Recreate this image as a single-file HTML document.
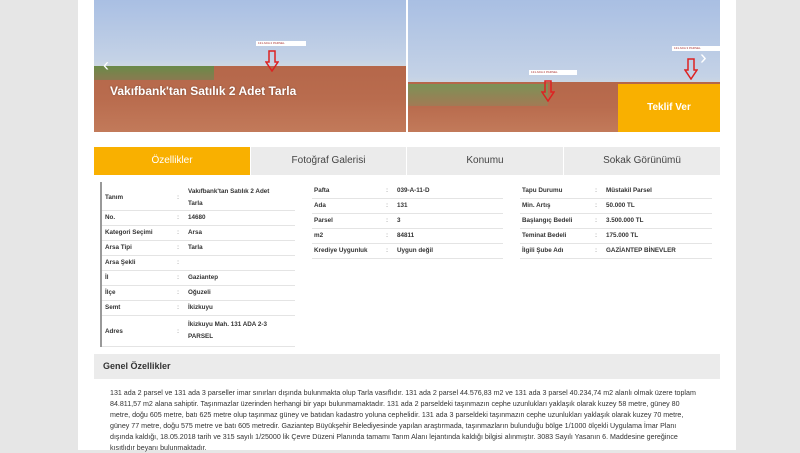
<!DOCTYPE html>
<html><head><meta charset="utf-8"><style>
*{margin:0;padding:0;box-sizing:border-box}
body{width:800px;height:450px;overflow:hidden;background:#e6e6e6;font-family:"Liberation Sans",sans-serif;position:relative}
.panel{position:absolute;left:78px;top:0;width:658px;height:450px;background:#fff}
.img{position:absolute;top:0;height:132px;overflow:hidden}
.sky{position:absolute;left:0;right:0;top:0;height:70px;background:linear-gradient(#a9bfe3,#c4d2e6 85%,#d5dbe0)}
.field{position:absolute;left:0;right:0;top:64px;bottom:0;background:linear-gradient(#b5674a,#b96c4e 50%,#c27a5a)}
.lbl{position:absolute;background:#fff;height:5px;font-size:3px;color:#a33;line-height:5px;padding-left:2px}
.arrow{position:absolute;width:14px;height:22px}
.tab{position:absolute;top:147px;height:28px;background:#ebebeb;font-size:10px;color:#444;text-align:center;line-height:28px}
.row{position:absolute;border-bottom:1px solid #e4e4e4;font-size:6.3px;color:#333;font-weight:bold}
.row span{position:absolute}
.para{position:absolute;left:110px;top:388px;width:620px;font-size:7.1px;line-height:10.9px;color:#333;white-space:nowrap}
</style></head><body>
<div class="panel"></div>
<div class="img" style="left:94px;width:312px">
 <div class="sky"></div><div class="field" style="top:66px"></div>
 <div style="position:absolute;left:0;top:66px;width:120px;height:14px;background:linear-gradient(#6a8a48,#8a7a50)"></div>
 <div class="lbl" style="left:162px;top:41px;width:50px">131 ADA 2 PARSEL</div>
 <svg class="arrow" style="left:171px;top:50px" viewBox="0 0 14 22"><path d="M4 1h6v11h3L7 21 1 12h3z" fill="none" stroke="#d22" stroke-width="1.5"/></svg>
 <div style="position:absolute;left:9px;top:55px;color:#fff;font-size:18px">&#8249;</div>
 <div style="position:absolute;left:16px;top:84px;color:#fff;font-size:12px;font-weight:bold;text-shadow:0 0 2px rgba(0,0,0,.3)">Vakıfbank'tan Satılık 2 Adet Tarla</div>
</div>
<div class="img" style="left:408px;width:312px">
 <div class="sky" style="height:90px"></div><div class="field" style="top:82px"></div>
 <div style="position:absolute;left:0;top:84px;width:140px;height:22px;background:linear-gradient(#7c9256,#a27a55)"></div>
 <div class="lbl" style="left:121px;top:70px;width:48px">131 ADA 2 PARSEL</div>
 <svg class="arrow" style="left:133px;top:80px" viewBox="0 0 14 22"><path d="M4 1h6v11h3L7 21 1 12h3z" fill="none" stroke="#d22" stroke-width="1.5"/></svg>
 <div class="lbl" style="left:264px;top:46px;width:48px">131 ADA 3 PARSEL</div>
 <svg class="arrow" style="left:276px;top:58px" viewBox="0 0 14 22"><path d="M4 1h6v11h3L7 21 1 12h3z" fill="none" stroke="#d22" stroke-width="1.5"/></svg>
 <div style="position:absolute;left:292px;top:47px;color:#fff;font-size:20px">&#8250;</div>
 <div style="position:absolute;left:210px;top:84px;width:102px;height:48px;background:#f9b000;color:#fff;font-weight:bold;font-size:10px;text-align:center;line-height:48px">Teklif Ver</div>
</div>

<div class="tab" style="left:94px;width:156px;background:#f9b000;color:#fff">Özellikler</div>
<div class="tab" style="left:250px;width:156px;border-left:1px solid #fff">Fotoğraf Galerisi</div>
<div class="tab" style="left:406px;width:157px;border-left:1px solid #fff">Konumu</div>
<div class="tab" style="left:563px;width:157px;border-left:1px solid #fff">Sokak Görünümü</div>

<div style="position:absolute;left:100px;top:182px;width:2px;height:165px;background:#999"></div>
<div class="row" style="left:102px;top:182px;width:193px;height:29px"><span style="left:3px;top:12px">Tanım</span><span style="left:75px;top:12px;color:#aaa">:</span><span style="left:86px;top:4px;line-height:12px">Vakıfbank'tan Satılık 2 Adet<br>Tarla</span></div>
<div class="row" style="left:102px;top:211px;width:193px;height:15px"><span style="left:3px;top:3px">No.</span><span style="left:75px;top:3px;color:#aaa">:</span><span style="left:86px;top:3px">14680</span></div>
<div class="row" style="left:102px;top:226px;width:193px;height:15px"><span style="left:3px;top:3px">Kategori Seçimi</span><span style="left:75px;top:3px;color:#aaa">:</span><span style="left:86px;top:3px">Arsa</span></div>
<div class="row" style="left:102px;top:241px;width:193px;height:15px"><span style="left:3px;top:3px">Arsa Tipi</span><span style="left:75px;top:3px;color:#aaa">:</span><span style="left:86px;top:3px">Tarla</span></div>
<div class="row" style="left:102px;top:256px;width:193px;height:15px"><span style="left:3px;top:3px">Arsa Şekli</span><span style="left:75px;top:3px;color:#aaa">:</span></div>
<div class="row" style="left:102px;top:271px;width:193px;height:15px"><span style="left:3px;top:3px">İl</span><span style="left:75px;top:3px;color:#aaa">:</span><span style="left:86px;top:3px">Gaziantep</span></div>
<div class="row" style="left:102px;top:286px;width:193px;height:15px"><span style="left:3px;top:3px">İlçe</span><span style="left:75px;top:3px;color:#aaa">:</span><span style="left:86px;top:3px">Oğuzeli</span></div>
<div class="row" style="left:102px;top:301px;width:193px;height:15px"><span style="left:3px;top:3px">Semt</span><span style="left:75px;top:3px;color:#aaa">:</span><span style="left:86px;top:3px">İkizkuyu</span></div>
<div class="row" style="left:102px;top:316px;width:193px;height:31px"><span style="left:3px;top:12px">Adres</span><span style="left:75px;top:12px;color:#aaa">:</span><span style="left:86px;top:3px;line-height:12px">İkizkuyu Mah. 131 ADA 2-3<br>PARSEL</span></div>

<div class="row" style="left:312px;top:184px;width:191px;height:15px"><span style="left:2px;top:3px">Pafta</span><span style="left:74px;top:3px;color:#aaa">:</span><span style="left:85px;top:3px">039-A-11-D</span></div>
<div class="row" style="left:312px;top:199px;width:191px;height:15px"><span style="left:2px;top:3px">Ada</span><span style="left:74px;top:3px;color:#aaa">:</span><span style="left:85px;top:3px">131</span></div>
<div class="row" style="left:312px;top:214px;width:191px;height:15px"><span style="left:2px;top:3px">Parsel</span><span style="left:74px;top:3px;color:#aaa">:</span><span style="left:85px;top:3px">3</span></div>
<div class="row" style="left:312px;top:229px;width:191px;height:15px"><span style="left:2px;top:3px">m2</span><span style="left:74px;top:3px;color:#aaa">:</span><span style="left:85px;top:3px">84811</span></div>
<div class="row" style="left:312px;top:244px;width:191px;height:15px"><span style="left:2px;top:3px">Krediye Uygunluk</span><span style="left:74px;top:3px;color:#aaa">:</span><span style="left:85px;top:3px">Uygun değil</span></div>

<div class="row" style="left:520px;top:184px;width:192px;height:15px"><span style="left:2px;top:3px">Tapu Durumu</span><span style="left:75px;top:3px;color:#aaa">:</span><span style="left:86px;top:3px">Müstakil Parsel</span></div>
<div class="row" style="left:520px;top:199px;width:192px;height:15px"><span style="left:2px;top:3px">Min. Artış</span><span style="left:75px;top:3px;color:#aaa">:</span><span style="left:86px;top:3px">50.000 TL</span></div>
<div class="row" style="left:520px;top:214px;width:192px;height:15px"><span style="left:2px;top:3px">Başlangıç Bedeli</span><span style="left:75px;top:3px;color:#aaa">:</span><span style="left:86px;top:3px">3.500.000 TL</span></div>
<div class="row" style="left:520px;top:229px;width:192px;height:15px"><span style="left:2px;top:3px">Teminat Bedeli</span><span style="left:75px;top:3px;color:#aaa">:</span><span style="left:86px;top:3px">175.000 TL</span></div>
<div class="row" style="left:520px;top:244px;width:192px;height:15px"><span style="left:2px;top:3px">İlgili Şube Adı</span><span style="left:75px;top:3px;color:#aaa">:</span><span style="left:86px;top:3px">GAZİANTEP BİNEVLER</span></div>

<div style="position:absolute;left:94px;top:354px;width:626px;height:25px;background:#ebebeb;font-size:9px;font-weight:bold;color:#333;line-height:25px;padding-left:9px">Genel Özellikler</div>
<div class="para">131 ada 2 parsel ve 131 ada 3 parseller imar sınırları dışında bulunmakta olup Tarla vasıflıdır. 131 ada 2 parsel 44.576,83 m2 ve 131 ada 3 parsel 40.234,74 m2 alanlı olmak üzere toplam<br>84.811,57 m2 alana sahiptir. Taşınmazlar üzerinden herhangi bir yapı bulunmamaktadır. 131 ada 2 parseldeki taşınmazın cephe uzunlukları yaklaşık olarak kuzey 58 metre, güney 80<br>metre, doğu 605 metre, batı 625 metre olup taşınmaz güney ve batıdan kadastro yoluna cephelidir. 131 ada 3 parseldeki taşınmazın cephe uzunlukları yaklaşık olarak kuzey 70 metre,<br>güney 77 metre, doğu 575 metre ve batı 605 metredir. Gaziantep Büyükşehir Belediyesinde yapılan araştırmada, taşınmazların bulunduğu bölge 1/1000 ölçekli Uygulama İmar Planı<br>dışında kaldığı, 18.05.2018 tarih ve 315 sayılı 1/25000 lik Çevre Düzeni Planında tamamı Tarım Alanı lejantında kaldığı bilgisi alınmıştır. 3083 Sayılı Yasanın 6. Maddesine gereğince<br>kısıtlıdır beyanı bulunmaktadır.</div>
</body></html>
